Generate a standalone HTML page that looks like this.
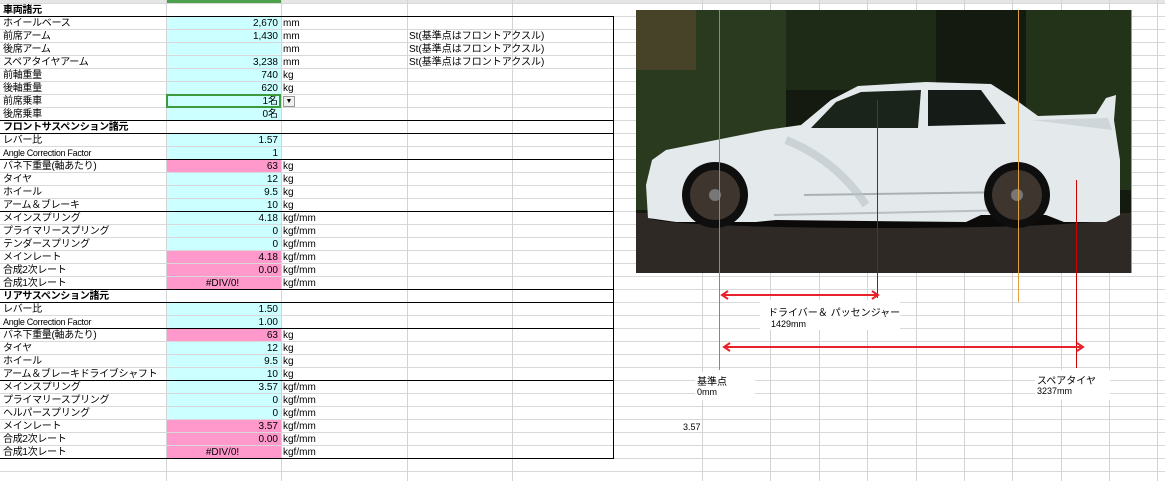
<!DOCTYPE html>
<html><head><meta charset="utf-8"><style>
body{margin:0;width:1165px;height:481px;overflow:hidden;background:#fff;position:relative;font-family:"Liberation Sans","Noto Sans CJK JP",sans-serif;font-size:10px;color:#000}
.grid{position:absolute;left:0;top:0;width:1165px;height:481px;
background-image:repeating-linear-gradient(to bottom,transparent 0,transparent 3px,#d9d9d9 3px,#d9d9d9 4px,transparent 4px,transparent 13px);
background-size:1165px 13px;background-position:0 0}
.v{position:absolute;top:0;width:1px;height:481px;background:#d4d4d4}
.r{position:absolute;left:0;width:614px;height:13px;line-height:13px;white-space:nowrap}
.a{position:absolute;left:3px;top:0;letter-spacing:-0.3px}
.b{position:absolute;left:167px;width:114px;top:0;height:12px;text-align:right;box-sizing:border-box;padding-right:3px}
.c{position:absolute;left:283px;top:0}
.e{position:absolute;left:409px;top:0}
.cy{background:#ccffff}.pk{background:#ff99cc}
.h{position:absolute;height:1px;background:#000}
.bold{font-weight:bold}
.t{position:absolute;white-space:nowrap;background:#fff;font-size:10px}
</style></head><body>
<div class="grid"></div>
<div style="position:absolute;left:0;top:0;width:1165px;height:3px;background:#e6e6e6"></div>
<div style="position:absolute;left:166px;top:0;width:115px;height:3px;background:#4ca04c"></div>
<div class="v" style="left:166px"></div><div class="v" style="left:281px"></div>
<div class="v" style="left:407px"></div><div class="v" style="left:512px"></div>
<div class="v" style="left:702px"></div><div class="v" style="left:770px"></div><div class="v" style="left:819px"></div><div class="v" style="left:867px"></div><div class="v" style="left:916px"></div><div class="v" style="left:964px"></div><div class="v" style="left:1012px"></div><div class="v" style="left:1061px"></div><div class="v" style="left:1109px"></div><div class="v" style="left:1157px"></div>

<div class="r" style="top:4px"><span class="a bold">車両諸元</span></div>
<div class="r" style="top:17px"><span class="a">ホイールベース</span><span class="b cy">2,670</span><span class="c">mm</span></div>
<div class="r" style="top:30px"><span class="a">前席アーム</span><span class="b cy">1,430</span><span class="c">mm</span><span class="e">St(基準点はフロントアクスル)</span></div>
<div class="r" style="top:43px"><span class="a">後席アーム</span><span class="b cy"></span><span class="c">mm</span><span class="e">St(基準点はフロントアクスル)</span></div>
<div class="r" style="top:56px"><span class="a">スペアタイヤアーム</span><span class="b cy">3,238</span><span class="c">mm</span><span class="e">St(基準点はフロントアクスル)</span></div>
<div class="r" style="top:69px"><span class="a">前軸重量</span><span class="b cy">740</span><span class="c">kg</span></div>
<div class="r" style="top:82px"><span class="a">後軸重量</span><span class="b cy">620</span><span class="c">kg</span></div>
<div class="r" style="top:95px"><span class="a">前席乗車</span><span class="b cy">1名</span></div>
<div class="r" style="top:108px"><span class="a">後席乗車</span><span class="b cy">0名</span></div>
<div class="r" style="top:121px"><span class="a bold">フロントサスペンション諸元</span></div>
<div class="r" style="top:134px"><span class="a">レバー比</span><span class="b cy">1.57</span></div>
<div class="r" style="top:147px"><span class="a" style="font-size:9px">Angle Correction Factor</span><span class="b cy">1</span></div>
<div class="r" style="top:160px"><span class="a">バネ下重量(軸あたり)</span><span class="b pk">63</span><span class="c">kg</span></div>
<div class="r" style="top:173px"><span class="a">タイヤ</span><span class="b cy">12</span><span class="c">kg</span></div>
<div class="r" style="top:186px"><span class="a">ホイール</span><span class="b cy">9.5</span><span class="c">kg</span></div>
<div class="r" style="top:199px"><span class="a">アーム＆ブレーキ</span><span class="b cy">10</span><span class="c">kg</span></div>
<div class="r" style="top:212px"><span class="a">メインスプリング</span><span class="b cy">4.18</span><span class="c">kgf/mm</span></div>
<div class="r" style="top:225px"><span class="a">プライマリースプリング</span><span class="b cy">0</span><span class="c">kgf/mm</span></div>
<div class="r" style="top:238px"><span class="a">テンダースプリング</span><span class="b cy">0</span><span class="c">kgf/mm</span></div>
<div class="r" style="top:251px"><span class="a">メインレート</span><span class="b pk">4.18</span><span class="c">kgf/mm</span></div>
<div class="r" style="top:264px"><span class="a">合成2次レート</span><span class="b pk">0.00</span><span class="c">kgf/mm</span></div>
<div class="r" style="top:277px"><span class="a">合成1次レート</span><span class="b pk" style="text-align:center">#DIV/0!</span><span class="c">kgf/mm</span></div>
<div class="r" style="top:290px"><span class="a bold">リアサスペンション諸元</span></div>
<div class="r" style="top:303px"><span class="a">レバー比</span><span class="b cy">1.50</span></div>
<div class="r" style="top:316px"><span class="a" style="font-size:9px">Angle Correction Factor</span><span class="b cy">1.00</span></div>
<div class="r" style="top:329px"><span class="a">バネ下重量(軸あたり)</span><span class="b pk">63</span><span class="c">kg</span></div>
<div class="r" style="top:342px"><span class="a">タイヤ</span><span class="b cy">12</span><span class="c">kg</span></div>
<div class="r" style="top:355px"><span class="a">ホイール</span><span class="b cy">9.5</span><span class="c">kg</span></div>
<div class="r" style="top:368px"><span class="a">アーム＆ブレーキドライブシャフト</span><span class="b cy">10</span><span class="c">kg</span></div>
<div class="r" style="top:381px"><span class="a">メインスプリング</span><span class="b cy">3.57</span><span class="c">kgf/mm</span></div>
<div class="r" style="top:394px"><span class="a">プライマリースプリング</span><span class="b cy">0</span><span class="c">kgf/mm</span></div>
<div class="r" style="top:407px"><span class="a">ヘルパースプリング</span><span class="b cy">0</span><span class="c">kgf/mm</span></div>
<div class="r" style="top:420px"><span class="a">メインレート</span><span class="b pk">3.57</span><span class="c">kgf/mm</span></div>
<div class="r" style="top:433px"><span class="a">合成2次レート</span><span class="b pk">0.00</span><span class="c">kgf/mm</span></div>
<div class="r" style="top:446px"><span class="a">合成1次レート</span><span class="b pk" style="text-align:center">#DIV/0!</span><span class="c">kgf/mm</span></div>

<div class="h" style="left:0;top:16px;width:614px"></div>
<div class="h" style="left:0;top:120px;width:614px"></div>
<div class="h" style="left:0;top:133px;width:614px"></div>
<div class="h" style="left:0;top:159px;width:614px"></div>
<div class="h" style="left:0;top:211px;width:614px"></div>
<div class="h" style="left:0;top:289px;width:614px"></div>
<div class="h" style="left:0;top:302px;width:614px"></div>
<div class="h" style="left:0;top:328px;width:614px"></div>
<div class="h" style="left:0;top:380px;width:614px"></div>
<div class="h" style="left:0;top:458px;width:614px"></div>
<div style="position:absolute;left:613px;top:16px;width:1px;height:443px;background:#000"></div>
<div style="position:absolute;left:166px;top:94px;width:111px;height:10px;border:2px solid #3d9a3d"></div>
<div style="position:absolute;left:283px;top:96px;width:10px;height:9px;border:1px solid #999;background:#f0f0f0;font-size:7px;line-height:9px;text-align:center">▼</div>

<svg style="position:absolute;left:636px;top:10px" width="496" height="263" viewBox="0 0 496 263">
<rect width="496" height="263" fill="#141a0f"/>
<rect x="0" y="0" width="150" height="200" fill="#2f4222" opacity="0.8"/>
<rect x="0" y="0" width="60" height="60" fill="#5a4a30" opacity="0.6"/>
<rect x="150" y="0" width="150" height="80" fill="#1e2b16"/>
<rect x="390" y="0" width="106" height="180" fill="#263a1c" opacity="0.8"/>
<rect x="0" y="203" width="496" height="60" fill="#2f2926"/>
<ellipse cx="245" cy="208" rx="230" ry="10" fill="#0c0a09"/>
<path d="M12 208 L10 175 L16 150 L30 140 L90 128 L130 120 L165 115 L195 90 L222 76 L290 72 L355 74 L380 90 L402 106 L460 104 L470 88 L480 85 L478 110 L484 150 L484 205 L470 212 L428 212 L410 205 L345 205 L330 212 L140 210 L120 212 L40 212 Z" fill="#e4e9ec"/>
<path d="M175 118 L200 92 L225 82 L285 80 L282 118 Z" fill="#1a241a"/>
<path d="M292 80 L345 80 L370 114 L292 116 Z" fill="#151c18"/>
<path d="M395 110 L472 108 L476 120 Z" fill="#cfd6da"/>
<path d="M138 205 L380 200" stroke="#b8bec2" stroke-width="2"/>
<path d="M168 185 L380 182" stroke="#aab0b4" stroke-width="2"/>
<path d="M150 130 Q200 150 230 195" stroke="#b9c3c8" stroke-width="8" fill="none" opacity="0.6"/>
<circle cx="79" cy="185" r="33" fill="#0e0e0e"/><circle cx="79" cy="185" r="25" fill="#3d352e"/><circle cx="79" cy="185" r="6" fill="#777"/>
<circle cx="381" cy="185" r="33" fill="#0e0e0e"/><circle cx="381" cy="185" r="25" fill="#3d352e"/><circle cx="381" cy="185" r="6" fill="#777"/>
</svg>
<div style="position:absolute;left:1131px;top:10px;width:1px;height:263px;background:#999"></div>

<div style="position:absolute;left:719px;top:10px;width:1px;height:360px;background:#e07020"></div>
<div style="position:absolute;left:1018px;top:10px;width:1px;height:292px;background:#e0a040"></div>
<div style="position:absolute;left:877px;top:100px;width:1px;height:198px;background:#c00"></div>
<div style="position:absolute;left:1076px;top:180px;width:1px;height:188px;background:#c00"></div>

<div class="t" style="left:760px;top:300px;width:140px;height:30px"></div>
<div class="t" style="left:768px;top:304px">ドライバー＆ パッセンジャー</div>
<div class="t" style="left:771px;top:319px;font-size:9px">1429mm</div>
<div class="t" style="left:695px;top:372px;width:60px;height:28px"></div>
<div class="t" style="left:697px;top:373px">基準点</div>
<div class="t" style="left:697px;top:387px;font-size:9px">0mm</div>
<div class="t" style="left:1035px;top:370px;width:75px;height:30px"></div>
<div class="t" style="left:1037px;top:372px">スペアタイヤ</div>
<div class="t" style="left:1037px;top:386px;font-size:9px">3237mm</div>
<div style="position:absolute;left:683px;top:422px;font-size:9px">3.57</div>

<svg style="position:absolute;left:0;top:0" width="1165" height="481">
<g stroke="#e8222a" stroke-width="2" fill="none">
<path d="M722 295 L878 295 M728 291 L722 295 L728 299 M872 291 L878 295 L872 299"/>
<path d="M724 347 L1083 347 M730 343 L724 347 L730 351 M1077 343 L1083 347 L1077 351"/>
</g></svg>
</body></html>
